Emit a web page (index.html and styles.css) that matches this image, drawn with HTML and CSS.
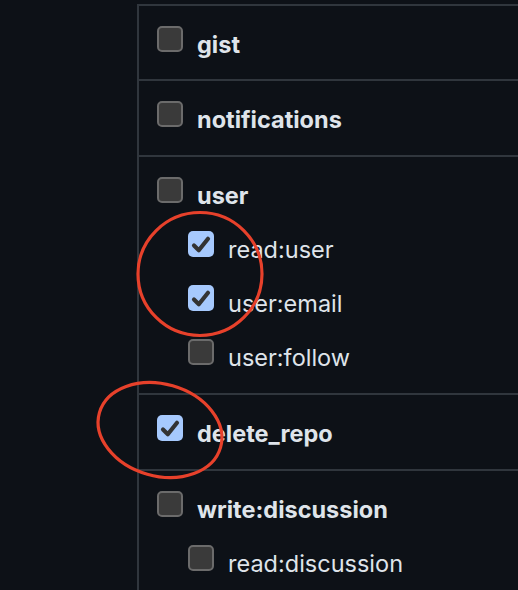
FILE: index.html
```html
<!DOCTYPE html>
<html>
<head>
<meta charset="utf-8">
<link rel="stylesheet" href="styles.css">
</head>
<body>
<div class="page">
  <div class="list">
    <div class="section">
      <div class="item main"><span class="box"></span><span class="label">gist</span></div>
    </div>
    <div class="section">
      <div class="item main"><span class="box"></span><span class="label">notifications</span></div>
    </div>
    <div class="section">
      <div class="item main"><span class="box"></span><span class="label">user</span></div>
      <div class="item sub"><span class="box checked"><svg viewBox="0 0 26 26"><path d="M6 14.5 L10.8 19.2 L20 7.8"/></svg></span><span class="label">read:user</span></div>
      <div class="item sub"><span class="box checked"><svg viewBox="0 0 26 26"><path d="M6 14.5 L10.8 19.2 L20 7.8"/></svg></span><span class="label">user:email</span></div>
      <div class="item sub"><span class="box"></span><span class="label">user:follow</span></div>
    </div>
    <div class="section">
      <div class="item main"><span class="box checked"><svg viewBox="0 0 26 26"><path d="M6 14.5 L10.8 19.2 L20 7.8"/></svg></span><span class="label">delete_repo</span></div>
    </div>
    <div class="section">
      <div class="item main"><span class="box"></span><span class="label">write:discussion</span></div>
      <div class="item sub"><span class="box"></span><span class="label">read:discussion</span></div>
    </div>
  </div>
  <svg class="marks" viewBox="0 0 518 590" width="518" height="590">
    <ellipse cx="200" cy="274" rx="62" ry="61.5"/>
    <ellipse cx="160" cy="430" rx="63" ry="46" transform="rotate(16 160 430)"/>
  </svg>
</div>
</body>
</html>
```
FILE: styles.css
```css
html, body {
  margin: 0;
  padding: 0;
  background: #0d1117;
}
.page {
  position: relative;
  width: 518px;
  height: 590px;
  overflow: hidden;
  padding-top: 4px;
  box-sizing: border-box;
}
.list {
  margin-left: 137px;
  border-left: 2px solid #30363d;
  min-height: 600px;
}
.section {
  border-top: 2px solid #30363d;
  margin-left: -2px;
  padding: 20px 0 0 20px;
}
.item {
  display: flex;
  height: 54px;
  align-items: flex-start;
  gap: 14px;
  font-family: Inter, "Noto Sans", sans-serif;
  color: #dfe4ea;
}
.section:first-child .item {
  height: 53px;
}
.item.sub {
  padding-left: 31px;
}
.label {
  line-height: 33px;
  margin-top: 2px;
  font-size: 23.5px;
}
.main .label {
  font-weight: 700;
}
.box {
  flex: none;
  width: 26px;
  height: 26px;
  box-sizing: border-box;
  border: 2px solid #6b6b6b;
  background: #3a3a3a;
  border-radius: 5px;
}
.box.checked {
  border: none;
  background: #a6c9fd;
}
.box svg {
  display: block;
  width: 26px;
  height: 26px;
}
.box svg path {
  fill: none;
  stroke: #333333;
  stroke-width: 4.2;
  stroke-linecap: round;
  stroke-linejoin: round;
}
.marks {
  position: absolute;
  left: 0;
  top: 0;
  pointer-events: none;
}
.marks ellipse {
  fill: none;
  stroke: #e7412b;
  stroke-width: 3.2;
}
```
